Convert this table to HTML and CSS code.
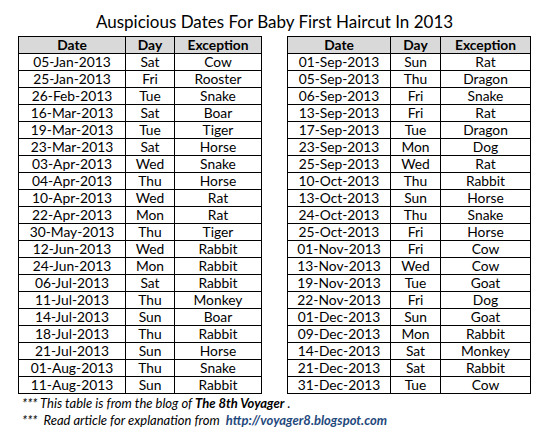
FILE: index.html
```html
<!DOCTYPE html>
<html>
<head>
<meta charset="utf-8">
<link rel="stylesheet" href="styles.css">
</head>
<body>
<div class="page">
  <h1 class="title">Auspicious Dates For Baby First Haircut In 2013</h1>
  <div class="tables">
    <table class="grid left">
      <colgroup><col class="c-date"><col class="c-day"><col class="c-exc"></colgroup>
      <thead><tr><th>Date</th><th>Day</th><th>Exception</th></tr></thead>
      <tbody>
        <tr><td>05-Jan-2013</td><td>Sat</td><td>Cow</td></tr>
        <tr><td>25-Jan-2013</td><td>Fri</td><td>Rooster</td></tr>
        <tr><td>26-Feb-2013</td><td>Tue</td><td>Snake</td></tr>
        <tr><td>16-Mar-2013</td><td>Sat</td><td>Boar</td></tr>
        <tr><td>19-Mar-2013</td><td>Tue</td><td>Tiger</td></tr>
        <tr><td>23-Mar-2013</td><td>Sat</td><td>Horse</td></tr>
        <tr><td>03-Apr-2013</td><td>Wed</td><td>Snake</td></tr>
        <tr><td>04-Apr-2013</td><td>Thu</td><td>Horse</td></tr>
        <tr><td>10-Apr-2013</td><td>Wed</td><td>Rat</td></tr>
        <tr><td>22-Apr-2013</td><td>Mon</td><td>Rat</td></tr>
        <tr><td>30-May-2013</td><td>Thu</td><td>Tiger</td></tr>
        <tr><td>12-Jun-2013</td><td>Wed</td><td>Rabbit</td></tr>
        <tr><td>24-Jun-2013</td><td>Mon</td><td>Rabbit</td></tr>
        <tr><td>06-Jul-2013</td><td>Sat</td><td>Rabbit</td></tr>
        <tr><td>11-Jul-2013</td><td>Thu</td><td>Monkey</td></tr>
        <tr><td>14-Jul-2013</td><td>Sun</td><td>Boar</td></tr>
        <tr><td>18-Jul-2013</td><td>Thu</td><td>Rabbit</td></tr>
        <tr><td>21-Jul-2013</td><td>Sun</td><td>Horse</td></tr>
        <tr><td>01-Aug-2013</td><td>Thu</td><td>Snake</td></tr>
        <tr><td>11-Aug-2013</td><td>Sun</td><td>Rabbit</td></tr>
      </tbody>
    </table>
    <table class="grid right">
      <colgroup><col class="c-date"><col class="c-day"><col class="c-exc"></colgroup>
      <thead><tr><th>Date</th><th>Day</th><th>Exception</th></tr></thead>
      <tbody>
        <tr><td>01-Sep-2013</td><td>Sun</td><td>Rat</td></tr>
        <tr><td>05-Sep-2013</td><td>Thu</td><td>Dragon</td></tr>
        <tr><td>06-Sep-2013</td><td>Fri</td><td>Snake</td></tr>
        <tr><td>13-Sep-2013</td><td>Fri</td><td>Rat</td></tr>
        <tr><td>17-Sep-2013</td><td>Tue</td><td>Dragon</td></tr>
        <tr><td>23-Sep-2013</td><td>Mon</td><td>Dog</td></tr>
        <tr><td>25-Sep-2013</td><td>Wed</td><td>Rat</td></tr>
        <tr><td>10-Oct-2013</td><td>Thu</td><td>Rabbit</td></tr>
        <tr><td>13-Oct-2013</td><td>Sun</td><td>Horse</td></tr>
        <tr><td>24-Oct-2013</td><td>Thu</td><td>Snake</td></tr>
        <tr><td>25-Oct-2013</td><td>Fri</td><td>Horse</td></tr>
        <tr><td>01-Nov-2013</td><td>Fri</td><td>Cow</td></tr>
        <tr><td>13-Nov-2013</td><td>Wed</td><td>Cow</td></tr>
        <tr><td>19-Nov-2013</td><td>Tue</td><td>Goat</td></tr>
        <tr><td>22-Nov-2013</td><td>Fri</td><td>Dog</td></tr>
        <tr><td>01-Dec-2013</td><td>Sun</td><td>Goat</td></tr>
        <tr><td>09-Dec-2013</td><td>Mon</td><td>Rabbit</td></tr>
        <tr><td>14-Dec-2013</td><td>Sat</td><td>Monkey</td></tr>
        <tr><td>21-Dec-2013</td><td>Sat</td><td>Rabbit</td></tr>
        <tr><td>31-Dec-2013</td><td>Tue</td><td>Cow</td></tr>
      </tbody>
    </table>
  </div>
  <div class="notes">
    <p class="note">*** This table is from the blog of <b>The 8th Voyager</b> .</p>
    <p class="note">***&nbsp; Read article for explanation from&nbsp; <b class="link">http://voyager8.blogspot.com</b></p>
  </div>
</div>
</body>
</html>
```
FILE: styles.css
```css
html, body {
  margin: 0;
  padding: 0;
  background: #ffffff;
}
.page {
  width: 546px;
  height: 442px;
  font-family: Lato, "Open Sans", sans-serif;
  color: #000000;
}
.title {
  margin: 0;
  padding-top: 11px;
  height: 25px;
  font-weight: normal;
  font-size: 17px;
  line-height: 22px;
  text-align: center;
  padding-left: 3px;
}
.tables {
  display: flex;
  padding-left: 18px;
  gap: 25px;
}
.grid {
  border-collapse: collapse;
  table-layout: fixed;
  font-size: 13.8px;
}
.grid th, .grid td {
  border: 1px solid #000000;
  height: 16px;
  padding: 0;
  text-align: center;
  line-height: 16px;
  white-space: nowrap;
}
.grid th {
  background: #d9d9d9;
  font-weight: bold;
}
.left .c-date { width: 107px; }
.left .c-day { width: 49px; }
.left .c-exc { width: 87px; }
.right .c-date { width: 103px; }
.right .c-day { width: 50px; }
.right .c-exc { width: 90px; }
.notes {
  padding-left: 22px;
  padding-top: 1px;
}
.note {
  margin: 0;
  font-style: italic;
  font-size: 13px;
  line-height: 17px;
}
.note b {
  font-weight: bold;
}
.link {
  color: #1f497d;
}
```
